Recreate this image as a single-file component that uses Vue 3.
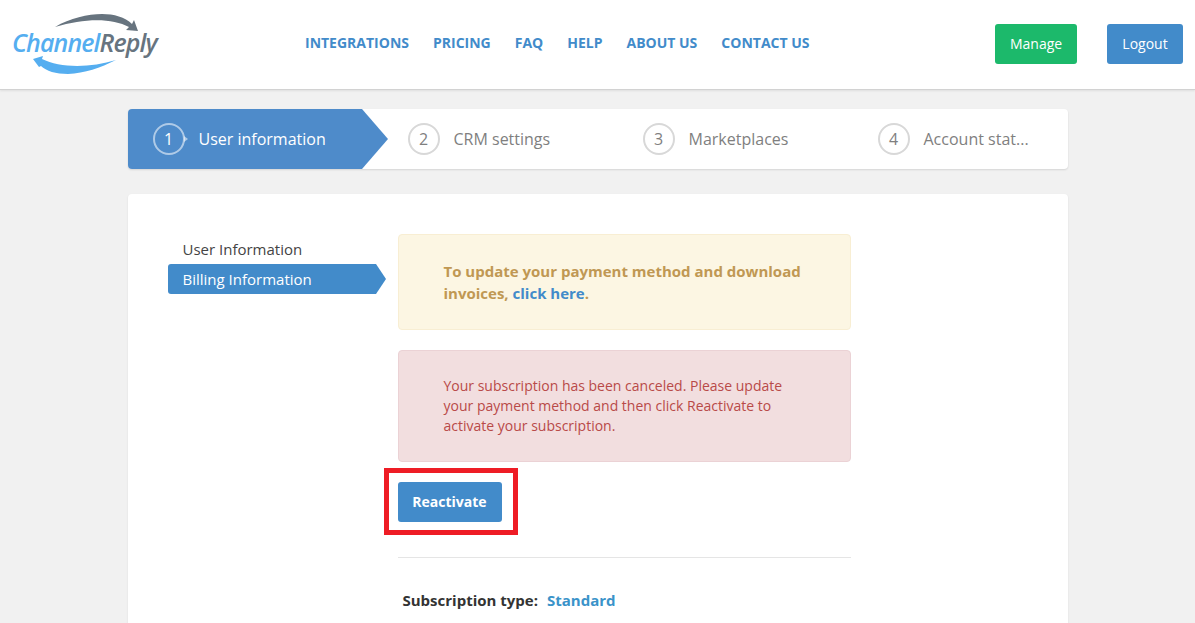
<script setup>
const links = ['INTEGRATIONS', 'PRICING', 'FAQ', 'HELP', 'ABOUT US', 'CONTACT US']
const steps = [
  { n: 1, label: 'User information', active: true },
  { n: 2, label: 'CRM settings' },
  { n: 3, label: 'Marketplaces' },
  { n: 4, label: 'Account stat...' }
]
</script>

<template>
  <div class="page">
    <header class="header">
      <a class="logo">
        <svg class="logo-arcs" width="150" height="76" viewBox="0 0 150 76">
          <path d="M55 27 C70 18 88 14 102 14 C114 14 125 17 132 24 L134 20 L138 31 L126 30 L129 27 C112 18 85 18 55 27 Z" fill="#67747f" />
          <path d="M116 60 C100 68 85 73 68 74 C56 74 46 71 41 66 L39 67 L33 59 L43 56 L42 59 C60 68 90 68 116 60 Z" fill="#55aef0" />
        </svg>
        <span class="logo-text"><span class="lt-blue">Channel</span><span class="lt-grey">Reply</span></span>
      </a>
      <nav class="nav">
        <a v-for="l in links" :key="l">{{ l }}</a>
      </nav>
      <div class="actions">
        <button class="btn green">Manage</button>
        <button class="btn blue">Logout</button>
      </div>
    </header>

    <main class="main">
      <section class="steps">
        <div v-for="s in steps" :key="s.n" class="step" :class="{ active: s.active }">
          <span class="num">{{ s.n }}</span>
          <span class="label">{{ s.label }}</span>
        </div>
      </section>

      <section class="card">
        <aside class="side">
          <a class="side-link">User Information</a>
          <a class="side-link current">Billing Information</a>
        </aside>
        <div class="content">
          <div class="alert warn">
            To update your payment method and download invoices, <a>click here</a>.
          </div>
          <div class="alert danger">
            Your subscription has been canceled. Please update your payment method and then click Reactivate to activate your subscription.
          </div>
          <div class="react-wrap">
            <button class="react">Reactivate</button>
            <span class="highlight"></span>
          </div>
          <hr class="rule" />
          <p class="sub"><b>Subscription type:</b><a>Standard</a></p>
        </div>
      </section>
    </main>
  </div>
</template>

<style scoped>
.page {
  height: 623px;
  overflow: hidden;
  background: #f1f1f1;
  font-family: "Open Sans", sans-serif;
}
.header {
  height: 90px;
  box-sizing: border-box;
  background: #fff;
  border-bottom: 1px solid #d2d2d2;
  box-shadow: 0 1px 2px rgba(0, 0, 0, 0.08);
  display: flex;
  align-items: flex-start;
  position: relative;
}
.logo {
  position: relative;
  display: block;
  width: 305px;
  height: 88px;
  flex: none;
}
.logo-arcs {
  position: absolute;
  left: 0;
  top: 0;
}
.logo-text {
  position: absolute;
  left: 12px;
  top: 24px;
  font-size: 25px;
  line-height: 36px;
  font-style: italic;
  font-weight: 600;
  letter-spacing: -0.9px;
  white-space: nowrap;
}
.lt-blue { color: #55aef0; }
.lt-grey { color: #67747f; }
.nav {
  display: flex;
  gap: 24px;
  padding-top: 33px;
  font-size: 14px;
  line-height: 19px;
  font-weight: 700;
  color: #428bca;
}
.actions {
  margin-left: auto;
  display: flex;
  gap: 30px;
  padding: 24px 12px 0 0;
}
.btn {
  height: 40px;
  border: 0;
  border-radius: 3px;
  color: #fff;
  font: 400 14px/18px "Open Sans", sans-serif;
  padding: 0 15px 1px;
}
.green { background: #1cb96b; width: 82px; }
.blue { background: #428bca; width: 76px; }
.main {
  width: 940px;
  margin: 19px auto 0 auto;
}
.steps {
  display: grid;
  grid-template-columns: repeat(4, 235px);
  height: 60px;
  background: #fff;
  border-radius: 4px;
  box-shadow: 0 1px 2px rgba(0, 0, 0, 0.12);
}
.step {
  display: flex;
  align-items: center;
  gap: 14px;
  padding-left: 45px;
  color: #7f7f7f;
  font-size: 16px;
  position: relative;
}
.step.active {
  padding-left: 25px;
  color: #fff;
  background: #4e8bca;
  border-radius: 4px 0 0 4px;
  margin-right: 1px;
}
.step.active::after {
  content: "";
  position: absolute;
  left: 100%;
  top: 0;
  border-left: 26px solid #4e8bca;
  border-top: 30px solid transparent;
  border-bottom: 30px solid transparent;
}
.num {
  width: 28px;
  height: 28px;
  border: 2px solid #d8d8d8;
  border-radius: 50%;
  display: flex;
  align-items: center;
  justify-content: center;
  font-size: 16px;
  flex: none;
  position: relative;
}
.active .num {
  border-color: rgba(255, 255, 255, 0.55);
}
.active .num::after {
  content: "";
  position: absolute;
  left: 100%;
  top: 50%;
  margin: -3px 0 0 1px;
  border-left: 4px solid rgba(255, 255, 255, 0.55);
  border-top: 3px solid transparent;
  border-bottom: 3px solid transparent;
}
.label {
  white-space: nowrap;
}
.card {
  margin-top: 25px;
  background: #fff;
  border-radius: 4px;
  box-shadow: 0 1px 2px rgba(0, 0, 0, 0.1);
  display: flex;
  padding: 40px 0 0 40px;
  height: 600px;
  box-sizing: border-box;
}
.side {
  width: 205px;
  margin-right: 25px;
  flex: none;
}
.side-link {
  display: block;
  height: 30px;
  line-height: 30px;
  padding-left: 15px;
  font-size: 15px;
  color: #444;
  position: relative;
}
.side-link.current {
  background: #428bca;
  color: #fff;
  border-radius: 3px 0 0 3px;
  box-sizing: border-box;
  width: 208px;
}
.side-link.current::after {
  content: "";
  position: absolute;
  left: 100%;
  top: 0;
  border-left: 10px solid #428bca;
  border-top: 15px solid transparent;
  border-bottom: 15px solid transparent;
}
.content {
  width: 453px;
  flex: none;
}
.alert {
  box-sizing: border-box;
  border-radius: 4px;
  border: 1px solid;
  padding: 25px 45px;
  font-size: 14px;
  line-height: 20px;
}
.warn {
  height: 96px;
  background: #fcf6e3;
  border-color: #f8eed3;
  color: #c09853;
  font-size: 15px;
  line-height: 22px;
  font-weight: 700;
}
.warn a {
  color: #428bca;
}
.danger {
  margin-top: 20px;
  height: 112px;
  background: #f2dedf;
  border-color: #ebd2d5;
  color: #b94a48;
}
.react-wrap {
  position: relative;
  margin-top: 20px;
  width: 104px;
  height: 40px;
}
.react {
  width: 104px;
  height: 40px;
  border: 0;
  border-radius: 3px;
  background: #428bca;
  color: #fff;
  font: 700 14px/18px "Open Sans", sans-serif;
  padding: 0 0 1px;
}
.highlight {
  position: absolute;
  left: -14px;
  top: -14px;
  width: 134px;
  height: 67px;
  box-sizing: border-box;
  border: 5px solid #ee1c25;
  pointer-events: none;
}
.rule {
  margin: 35px 0 0;
  border: 0;
  border-top: 1px solid #e5e5e5;
}
.sub {
  margin: 32px 0 0 5px;
  font-size: 15px;
  line-height: 20px;
  color: #333;
}
.sub a {
  margin-left: 9px;
  color: #3a93c9;
  font-weight: 700;
}
</style>

<style>
html, body { margin: 0; overflow: hidden; }
</style>
